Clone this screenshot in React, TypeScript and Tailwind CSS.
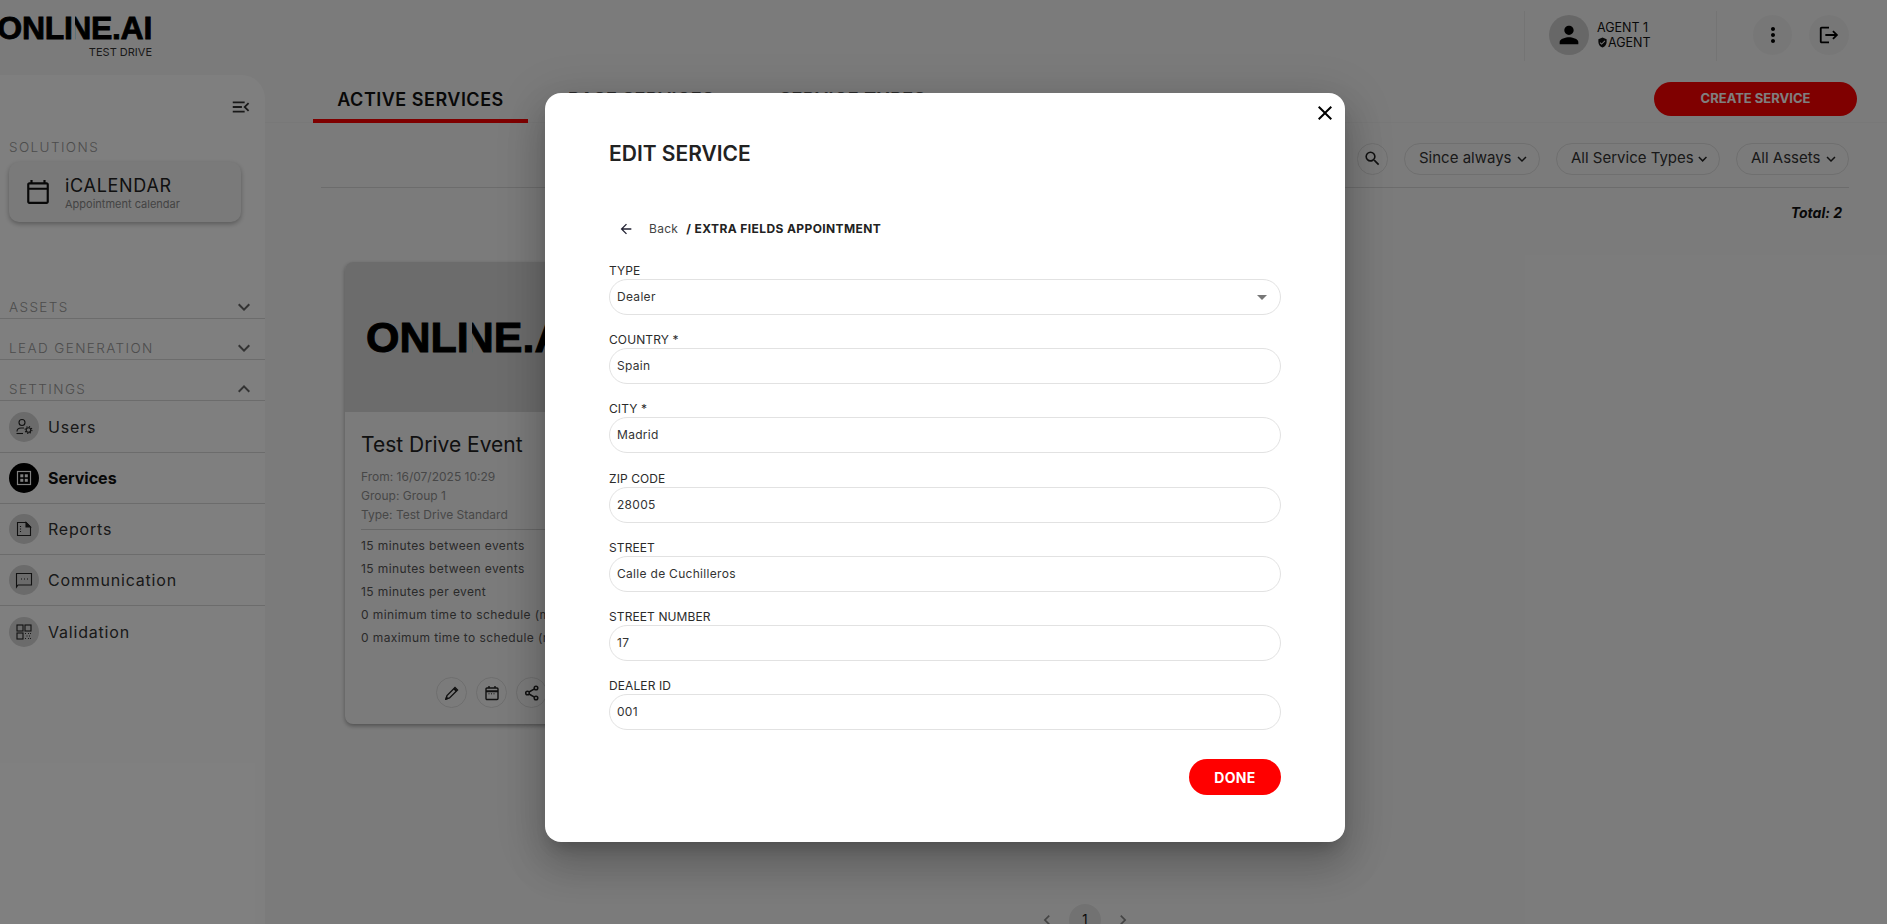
import {
  MdArrowBack,
  MdClose,
  MdKeyboardArrowDown,
  MdKeyboardArrowUp,
  MdLogout,
  MdMenuOpen,
  MdMoreVert,
  MdOutlineCalendarToday,
  MdPerson,
  MdSearch,
  MdVerifiedUser,
  MdArrowDropDown,
  MdChevronLeft,
  MdChevronRight,
} from "react-icons/md";

function Logo({ big }: { big?: boolean }) {
  return (
    <div
      className={
        big
          ? "flex font-['Liberation_Sans',sans-serif] font-bold text-[43px] leading-none tracking-[0px] text-black [-webkit-text-stroke:1px_black]"
          : "flex font-['Liberation_Sans',sans-serif] font-bold text-[32px] leading-none tracking-[-0.3px] text-black [-webkit-text-stroke:0.8px_black]"
      }
    >
      <span>ONLI</span>
      <span className="inline-block -ml-[0.14em] [clip-path:polygon(30%_0,100%_0,100%_100%,30%_100%)]">N</span>
      <span>E.AI</span>
    </div>
  );
}

function UsersIcon() {
  return (
    <svg width="18" height="18" viewBox="0 0 18 18" fill="none" stroke="#222" strokeWidth="1.100">
      <circle cx="7" cy="4.500" r="3" />
      <path d="M9 10H6c-2.500 0-4 1.500-4 3.500" />
      <path d="M1.500 15.500h6.500" />
      <circle cx="13.500" cy="12" r="2.300" />
      <circle cx="13.500" cy="12" r="3.400" strokeDasharray="1.200 1.470" />
    </svg>
  );
}

function ServicesIcon() {
  return (
    <svg width="16" height="16" viewBox="0 0 16 16" fill="none">
      <rect x="1.500" y="1.500" width="13" height="13" stroke="#fff" strokeWidth="1.200" />
      <rect x="4.300" y="4.300" width="3" height="3" fill="#fff" />
      <rect x="8.800" y="4.300" width="3" height="3" fill="#fff" />
      <rect x="4.300" y="8.800" width="3" height="3" fill="#fff" />
      <rect x="8.800" y="8.800" width="3" height="3" fill="#fff" />
    </svg>
  );
}

function ReportsIcon() {
  return (
    <svg width="16" height="16" viewBox="0 0 16 16" fill="none" stroke="#222" strokeWidth="1.100">
      <path d="M1.500 1.500h8.500l4.500 4.500v8.500h-13z" />
      <path d="M10 1.500l4.500 4.500H10z" fill="#222" />
      <path d="M4.500 5v7.500" strokeDasharray="1 1.500" />
    </svg>
  );
}

function ChatIcon() {
  return (
    <svg width="18" height="18" viewBox="0 0 18 18" fill="none" stroke="#222" strokeWidth="1.100">
      <path d="M1.500 2.500h15v11.500h-13.500l-1.500 2z" />
      <path d="M6 8h1M9 8h1M12 8h1" />
    </svg>
  );
}

function QrIcon() {
  return (
    <svg width="16" height="16" viewBox="0 0 16 16" fill="none" stroke="#222" strokeWidth="1.100">
      <rect x="1" y="1" width="6" height="6" />
      <rect x="9" y="1" width="6" height="6" />
      <rect x="1" y="9" width="6" height="6" />
      <path d="M9 9.500h1M12 9.500h1M14 9.500h1M10.500 12h1M13 12h1M9 14.500h1M12 14.500h1M14 14.500h1" strokeWidth="0.900" />
    </svg>
  );
}

function PencilIcon() {
  return (
    <svg width="16" height="16" viewBox="0 0 16 16" fill="none" stroke="#222" strokeWidth="1.400">
      <path d="M2 14l1-3.500L11 2.500 13.500 5l-8 8z" />
      <path d="M10 3.500L12.500 6" strokeWidth="1.800" />
      <path d="M2 14l1.500-.5-1-1z" fill="#222" />
    </svg>
  );
}

function CalendarIcon() {
  return (
    <svg width="16" height="16" viewBox="0 0 16 16" fill="none" stroke="#222" strokeWidth="1.400">
      <rect x="2" y="3" width="12" height="11.500" rx="1" />
      <path d="M2 6.200h12" strokeWidth="2" />
      <path d="M5 1v2M11 1v2" />
      <path d="M4.500 8.800h7" strokeWidth="1" strokeDasharray="1 1.500" />
    </svg>
  );
}

function ShareIcon() {
  return (
    <svg width="16" height="16" viewBox="0 0 16 16" fill="none" stroke="#222" strokeWidth="1.500">
      <circle cx="12" cy="3" r="1.800" />
      <circle cx="3.500" cy="8" r="1.800" />
      <circle cx="12" cy="13" r="1.800" />
      <path d="M5 7l5.500-3.200M5 9l5.500 3.200" />
    </svg>
  );
}

function SectionTitle({ label, open }: { label: string; open?: boolean }) {
  return (
    <div className="flex items-center justify-between h-[29px] pt-[6px] pl-[9px] pr-[9px] border-b border-[#d8d8d8] mb-[12px]">
      <span className="text-[13.500px] font-light text-[#999] tracking-[1.400px]">{label}</span>
      {open ? (
        <MdKeyboardArrowUp size={24} color="#666" />
      ) : (
        <MdKeyboardArrowDown size={24} color="#666" />
      )}
    </div>
  );
}

function NavRow({
  label,
  icon,
  active,
  last,
}: {
  label: string;
  icon: React.ReactNode;
  active?: boolean;
  last?: boolean;
}) {
  return (
    <div className={last ? "flex items-center gap-[9px] h-[51px] pl-[9px]" : "flex items-center gap-[9px] h-[51px] pl-[9px] border-b border-[#d8d8d8]"}>
      <div
        className={
          active
            ? "w-[30px] h-[30px] rounded-full bg-black flex items-center justify-center"
            : "w-[30px] h-[30px] rounded-full bg-[#d6d6d6] flex items-center justify-center"
        }
      >
        {icon}
      </div>
      <span className={active ? "text-[16px] font-bold text-[#111]" : "text-[16px] tracking-[0.8px] text-[#333]"}>{label}</span>
    </div>
  );
}

function FilterPill({ label, w }: { label: string; w: string }) {
  return (
    <div className={"h-[32px] rounded-full border border-[#dedede] flex items-center justify-between pl-[14px] pr-[8px] text-[15px] text-[#333] whitespace-nowrap " + w}>
      <span>{label}</span>
      <MdKeyboardArrowDown size={18} color="#222" />
    </div>
  );
}

function CardAction({ children }: { children: React.ReactNode }) {
  return (
    <div className="w-[31px] h-[31px] rounded-full border border-[#dddddd] flex items-center justify-center text-[#222]">
      {children}
    </div>
  );
}

function Field({ label, value, select }: { label: string; value: string; select?: boolean }) {
  return (
    <div className="mb-[17.200px]">
      <div className="text-[12px] leading-[16px] text-[#2b2b2b] tracking-[0.1px]">{label}</div>
      <div className="h-[36px] rounded-full border border-[#e2e2e2] flex items-center justify-between pl-[7px] pr-[6px] text-[12px] text-[#333] tracking-[0.3px]">
        <span>{value}</span>
        {select && <MdArrowDropDown size={24} color="#777" />}
      </div>
    </div>
  );
}

export default function App() {
  return (
    <div className="relative h-screen overflow-hidden bg-[#f7f7f7] font-['Inter',sans-serif]">
      <header className="h-[75px] flex items-center justify-between pr-[38px]">
        <div className="flex flex-col items-end w-[152px] mb-[5px]">
          <Logo />
          <span className="text-[11px] leading-[14px] mt-[1px] text-[#333]">TEST DRIVE</span>
        </div>
        <div className="flex items-center">
          <div className="h-[50px] w-[1px] bg-[#e8e8e8] mb-[3px]" />
          <div className="flex items-center gap-[8px] w-[191px] pl-[24px] mb-[5px]">
            <div className="w-[40px] h-[40px] rounded-full bg-[#cfcfcf] flex items-center justify-center">
              <MdPerson size={28} color="#000" />
            </div>
            <div className="text-[12.500px] leading-[15px] text-[#111]">
              <div>AGENT 1</div>
              <div className="flex items-center">
                <MdVerifiedUser size={11} />
                <span>AGENT</span>
              </div>
            </div>
          </div>
          <div className="h-[50px] w-[1px] bg-[#e8e8e8] mb-[3px]" />
          <div className="flex gap-[17px] ml-[36px] mb-[5px]">
            <div className="w-[39px] h-[40px] rounded-full bg-[#efefef] flex items-center justify-center">
              <MdMoreVert size={24} color="#000" />
            </div>
            <div className="w-[40px] h-[40px] rounded-full bg-[#efefef] flex items-center justify-center">
              <MdLogout size={22} color="#000" />
            </div>
          </div>
        </div>
      </header>

      <div className="flex h-[849px]">
        <aside className="w-[265px] bg-white rounded-tr-[24px] shrink-0">
          <div className="h-[43px] flex items-end justify-end pr-[13px]">
            <MdMenuOpen size={22} color="#333" />
          </div>
          <div className="pl-[9px] mt-[19px] text-[13.500px] leading-[20px] font-light text-[#999] tracking-[1.400px]">SOLUTIONS</div>
          <div className="ml-[9px] mt-[5px] w-[232px] h-[60px] rounded-[10px] bg-[#f4f4f4] shadow-[0_2px_5px_rgba(0,0,0,0.3)] flex items-center pl-[16px] gap-[14px]">
            <MdOutlineCalendarToday size={26} color="#111" />
            <div>
              <div className="text-[18px] leading-[24px] text-[#222] tracking-[0.7px]">iCALENDAR</div>
              <div className="text-[11px] leading-[13px] text-[#888]">Appointment calendar</div>
            </div>
          </div>
          <div className="mt-[68px]">
            <SectionTitle label="ASSETS" />
            <SectionTitle label="LEAD GENERATION" />
            <SectionTitle label="SETTINGS" open />
          </div>
          <div className="-mt-[11px]">
            <NavRow label="Users" icon={<UsersIcon />} />
            <NavRow label="Services" icon={<ServicesIcon />} active />
            <NavRow label="Reports" icon={<ReportsIcon />} />
            <NavRow label="Communication" icon={<ChatIcon />} />
            <NavRow label="Validation" icon={<QrIcon />} last />
          </div>
        </aside>

        <main className="flex-1">
          <div className="h-[48px] flex items-end justify-between pl-[48px] pr-[30px] border-b border-[#f0f0f0]">
            <div className="flex -mb-[1px]">
              <div className="w-[215px] h-[44px] border-b-4 border-[#ff0000] flex items-center justify-center text-[18px] font-semibold text-[#111] tracking-[0.5px]">
                ACTIVE SERVICES
              </div>
              <div className="ml-[40px] h-[44px] border-b-4 border-transparent flex items-center text-[18px] font-semibold text-[#555] tracking-[0.5px]">BASE SERVICES</div>
              <div className="ml-[65px] h-[44px] border-b-4 border-transparent flex items-center text-[18px] font-semibold text-[#555] tracking-[0.5px]">SERVICE TYPES</div>
            </div>
            <div className="w-[203px] h-[34px] mb-[6px] rounded-full bg-[#ff0000] flex items-center justify-center text-[13px] font-bold text-white">
              CREATE SERVICE
            </div>
          </div>

          <div className="ml-[56px] mr-[38px] h-[65px] pt-[7px] flex items-center justify-end gap-[16px] border-b border-[#d8d8d8]">
            <div className="w-[31px] h-[32px] rounded-full border border-[#dedede] flex items-center justify-center">
              <MdSearch size={19} color="#222" />
            </div>
            <FilterPill label="Since always" w="w-[136px]" />
            <FilterPill label="All Service Types" w="w-[164px]" />
            <FilterPill label="All Assets" w="w-[113px]" />
          </div>

          <div className="text-right pr-[45px] mt-[15px] text-[14px] leading-[20px] italic font-bold text-[#111]">Total: 2</div>

          <div className="ml-[80px] mt-[39px] w-[400px] h-[462px] rounded-[8px] bg-[#f7f7f7] shadow-[0_2px_4px_rgba(0,0,0,0.35)] overflow-hidden">
            <div className="h-[150px] bg-[#d8d8d8] flex items-center pl-[21px]">
              <Logo big />
            </div>
            <div className="px-[16px] pt-[19px]">
              <div className="text-[21px] leading-[28px] text-[#222]">Test Drive Event</div>
              <div className="mt-[8px] text-[12px] leading-[19px] text-[#8f8f8f]">
                <div>From: 16/07/2025 10:29</div>
                <div>Group: Group 1</div>
                <div>Type: Test Drive Standard</div>
              </div>
              <div className="mt-[5px] pt-[4px] border-t border-[#cfcfcf] text-[12px] leading-[23px] text-[#555] tracking-[0.4px]">
                <div>15 minutes between events</div>
                <div>15 minutes between events</div>
                <div>15 minutes per event</div>
                <div>0 minimum time to schedule (minutes)</div>
                <div>0 maximum time to schedule (minutes)</div>
              </div>
              <div className="mt-[28px] flex gap-[9px] pl-[75px]">
                <CardAction><PencilIcon /></CardAction>
                <CardAction><CalendarIcon /></CardAction>
                <CardAction><ShareIcon /></CardAction>
              </div>
            </div>
          </div>

          <div className="mt-[180px] pl-[772px] flex items-center gap-[12px] text-[#888]">
            <MdChevronLeft size={20} />
            <div className="w-[32px] h-[32px] rounded-full bg-[#e4e4e4] flex items-center justify-center text-[13px] text-[#111]">1</div>
            <MdChevronRight size={20} />
          </div>
        </main>
      </div>

      <div className="absolute inset-0 bg-black/50 pt-[93px] pl-[545px]">
        <div className="relative w-[800px] h-[749px] bg-white rounded-[16px] px-[64px] pt-[48px] shadow-[0_11px_15px_-7px_rgba(0,0,0,0.2),0_24px_38px_3px_rgba(0,0,0,0.14),0_9px_46px_8px_rgba(0,0,0,0.12)]">
          <button className="absolute right-[8px] top-[8px] text-black">
            <MdClose size={24} />
          </button>
          <div className="text-[21px] leading-[26px] font-semibold text-[#222]">EDIT SERVICE</div>
          <div className="mt-[50px] h-[24px] flex items-center text-[12px] pl-[9px]">
            <MdArrowBack size={16} color="#223" />
            <span className="ml-[15px] text-[#444] tracking-[0.3px]">Back</span>
            <span className="ml-[8px] font-bold text-[#222] tracking-[0.4px]">/ EXTRA FIELDS APPOINTMENT</span>
          </div>
          <div className="mt-[22px]">
            <Field label="TYPE" value="Dealer" select />
            <Field label="COUNTRY *" value="Spain" />
            <Field label="CITY *" value="Madrid" />
            <Field label="ZIP CODE" value="28005" />
            <Field label="STREET" value="Calle de Cuchilleros" />
            <Field label="STREET NUMBER" value="17" />
            <Field label="DEALER ID" value="001" />
          </div>
          <div className="flex justify-end mt-[29px]">
            <button className="w-[92px] h-[36px] rounded-full bg-[#ff0000] text-white text-[14px] font-bold tracking-[0.3px]">DONE</button>
          </div>
        </div>
      </div>
    </div>
  );
}
